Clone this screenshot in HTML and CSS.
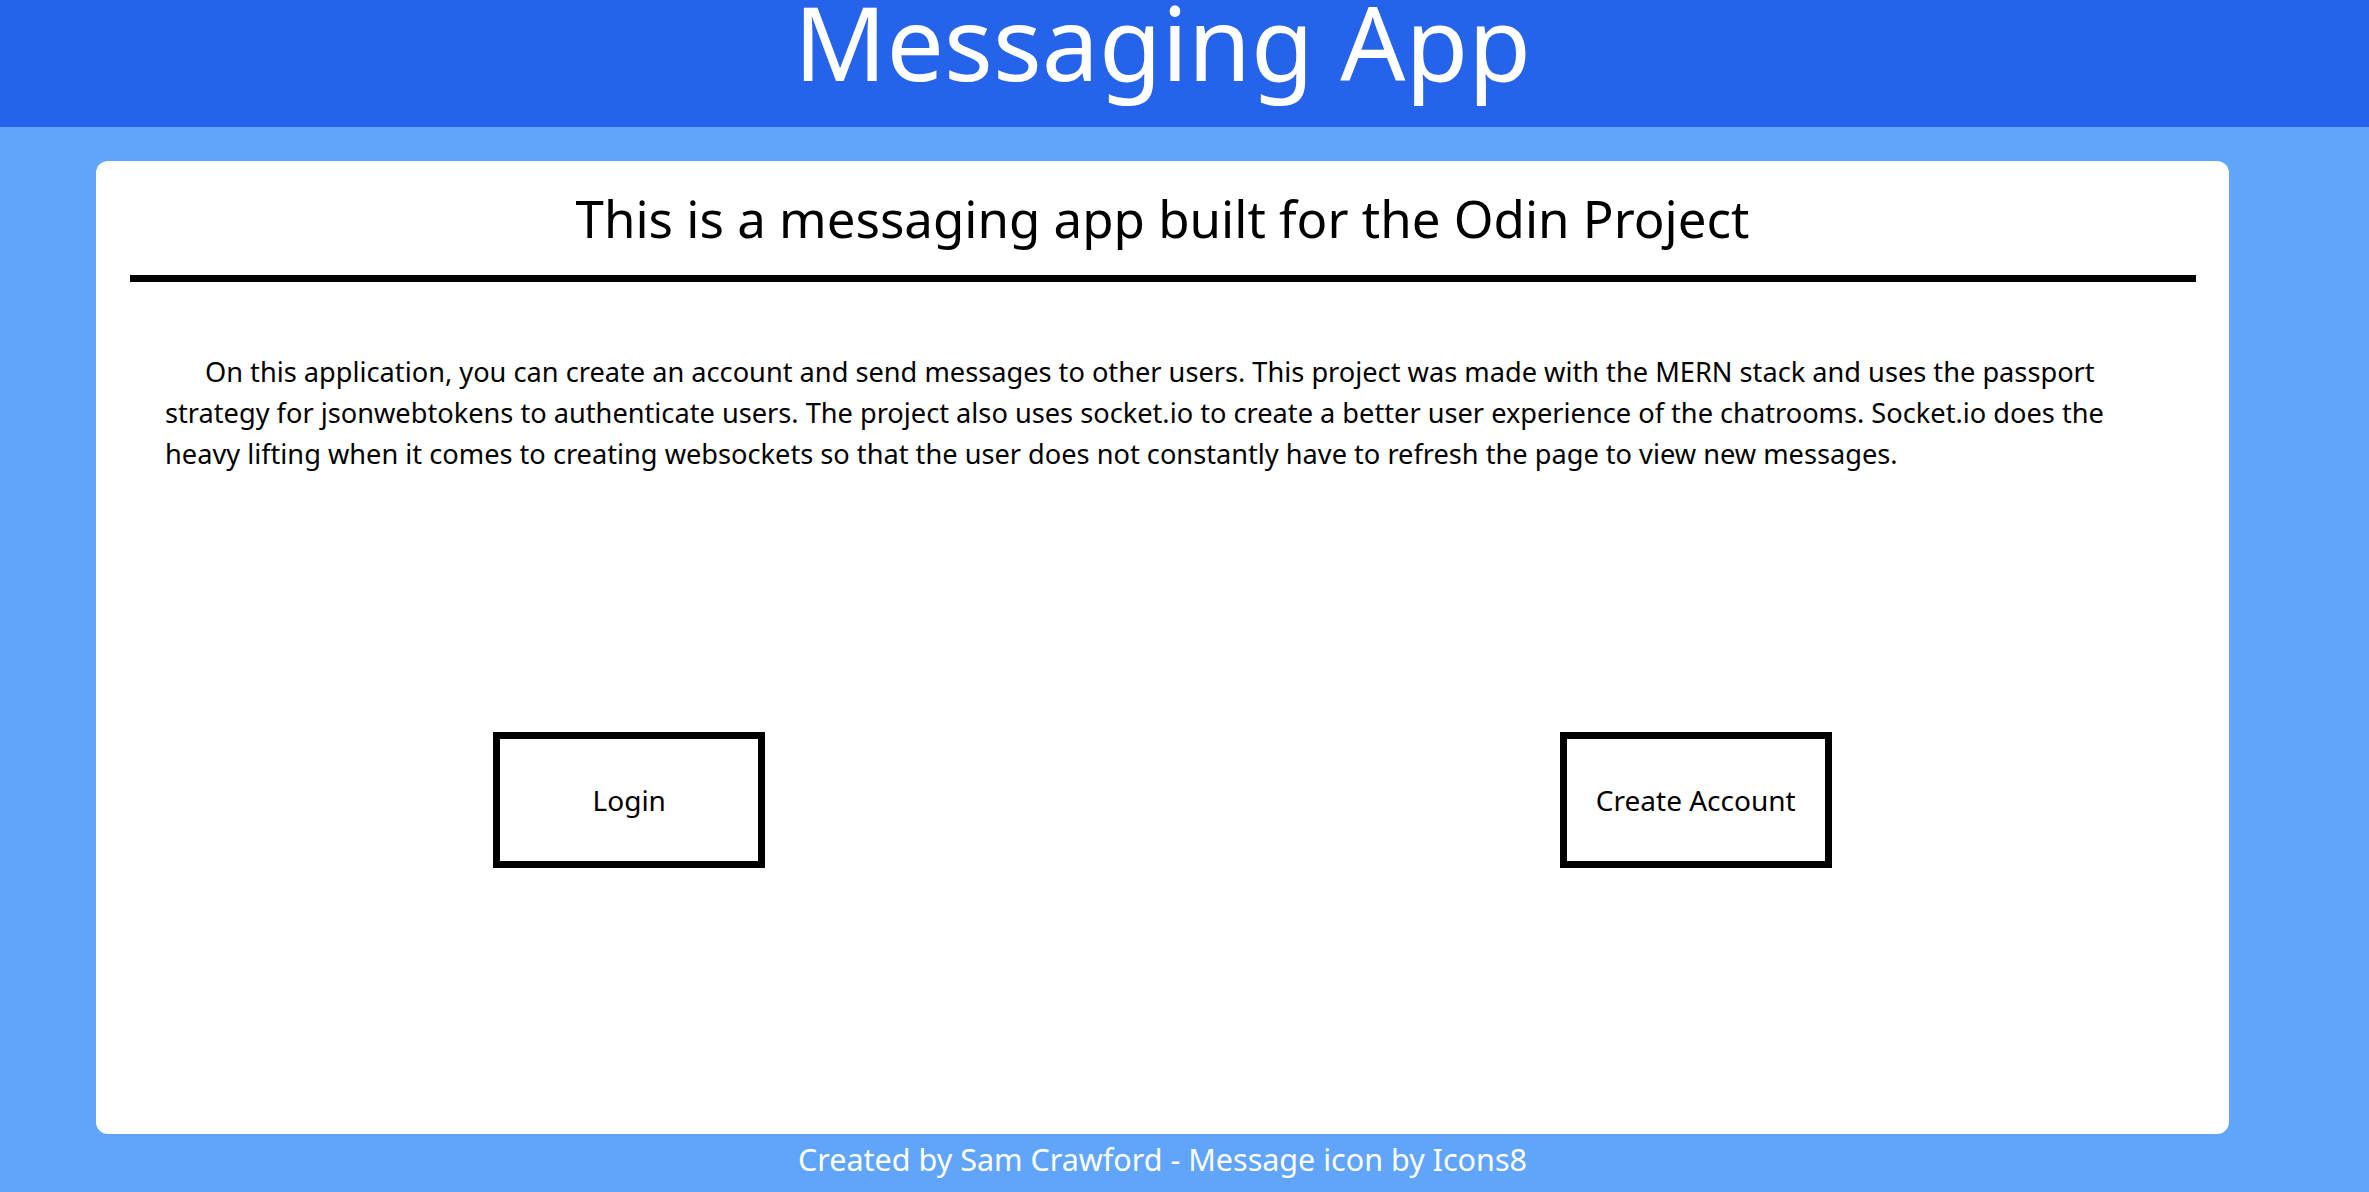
FILE: index.html
```html
<!DOCTYPE html>
<html lang="en">
<head>
<meta charset="utf-8">
<title>Messaging App</title>
<link rel="stylesheet" href="styles.css">
</head>
<body>
<header class="top-bar">
  <h1 class="app-title">Messaging App</h1>
</header>
<main class="card">
  <h2 class="card-title">This is a messaging app built for the Odin Project</h2>
  <div class="rule"></div>
  <p class="intro">On this application, you can create an account and send messages to other users. This project was made with the MERN stack and uses the passport strategy for jsonwebtokens to authenticate users. The project also uses socket.io to create a better user experience of the chatrooms. Socket.io does the heavy lifting when it comes to creating websockets so that the user does not constantly have to refresh the page to view new messages.</p>
  <div class="actions">
    <button class="action-btn">Login</button>
    <button class="action-btn">Create Account</button>
  </div>
</main>
<footer class="credits">Created by Sam Crawford - Message icon by Icons8</footer>
</body>
</html>
```

FILE: styles.css
```css
html, body {
  margin: 0;
  padding: 0;
}
body {
  background: #60a5fa;
  font-family: "Noto Sans", "Open Sans", sans-serif;
  height: 1192px;
  overflow: hidden;
}
.top-bar {
  background: #2563eb;
  height: 127px;
  padding-right: 44px;
  display: flex;
  justify-content: center;
  align-items: flex-start;
}
.app-title {
  margin: 0;
  color: #fff;
  font-weight: 400;
  font-size: 102px;
  line-height: 83px;
}
.card {
  margin: 34px 0 0 96px;
  width: 2133px;
  height: 973px;
  background: #fff;
  border-radius: 12px;
  display: flex;
  flex-direction: column;
}
.card-title {
  margin: 22px 0 22px 0;
  font-weight: 400;
  font-size: 51px;
  text-align: center;
  color: #000;
}
.rule {
  height: 7px;
  background: #000;
  margin: 0 33px 0 34px;
}
.intro {
  margin: 70px 69px 0 69px;
  font-size: 27.2px;
  line-height: 1.5;
  text-indent: 40px;
  color: #000;
}
.actions {
  flex: 1;
  display: flex;
  justify-content: space-around;
  align-items: center;
  padding-bottom: 8px;
}
.action-btn {
  width: 272px;
  height: 136px;
  border: 7px solid #000;
  background: #fff;
  font-family: "Noto Sans", "Open Sans", sans-serif;
  font-size: 28px;
  color: #000;
  padding: 0;
}
.credits {
  margin-top: 4px;
  padding-right: 44px;
  text-align: center;
  color: #fff;
  font-size: 30.5px;
}
```
